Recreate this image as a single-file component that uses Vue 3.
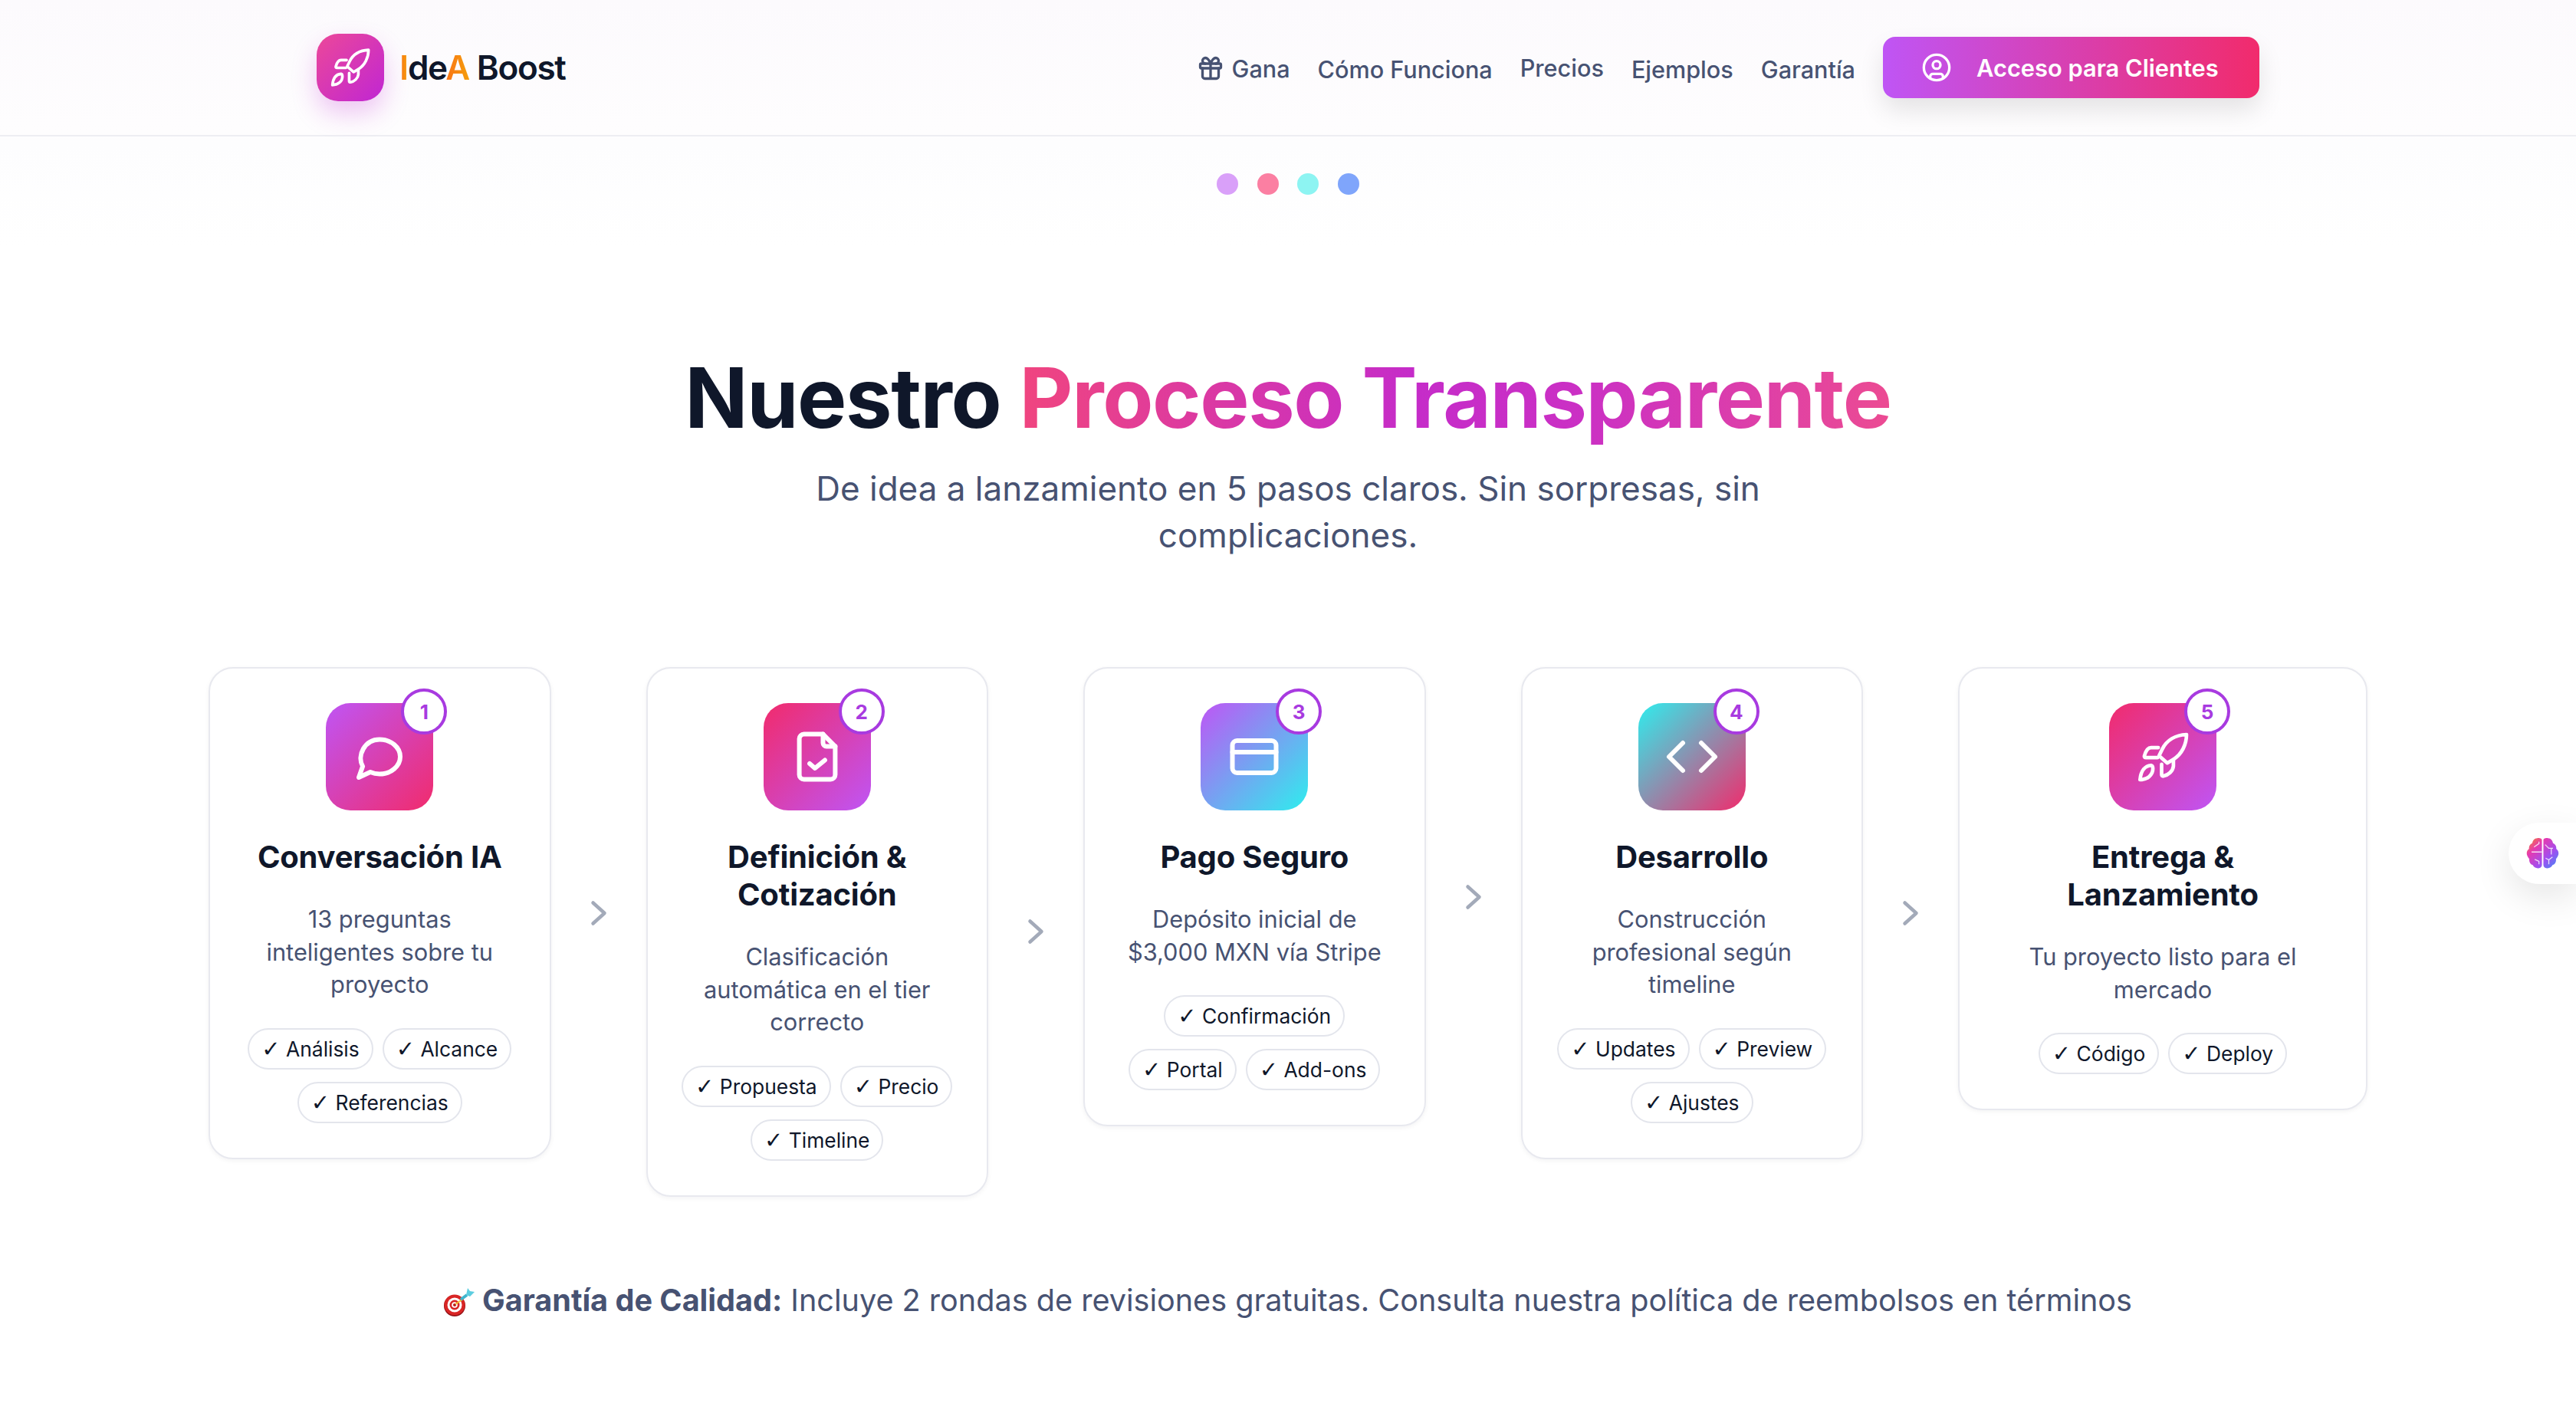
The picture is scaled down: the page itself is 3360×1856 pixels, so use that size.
<script setup>
const steps = [
  {
    n: 1,
    title: "Conversación IA",
    desc: "13 preguntas inteligentes sobre tu proyecto",
    chips: ["Análisis", "Alcance", "Referencias"],
    grad: "g1",
    icon: "chat",
  },
  {
    n: 2,
    title: "Definición & Cotización",
    desc: "Clasificación automática en el tier correcto",
    chips: ["Propuesta", "Precio", "Timeline"],
    grad: "g2",
    icon: "doc",
  },
  {
    n: 3,
    title: "Pago Seguro",
    desc: "Depósito inicial de $3,000 MXN vía Stripe",
    chips: ["Confirmación", "Portal", "Add-ons"],
    grad: "g3",
    icon: "card",
  },
  {
    n: 4,
    title: "Desarrollo",
    desc: "Construcción profesional según timeline",
    chips: ["Updates", "Preview", "Ajustes"],
    grad: "g4",
    icon: "code",
  },
  {
    n: 5,
    title: "Entrega & Lanzamiento",
    desc: "Tu proyecto listo para el mercado",
    chips: ["Código", "Deploy"],
    grad: "g5",
    icon: "rocket",
  },
];

const links = [
  { label: "Cómo Funciona", cls: "" },
  { label: "Precios", cls: "raised" },
  { label: "Ejemplos", cls: "" },
  { label: "Garantía", cls: "" },
];

const rocketPaths = [
  "M243 82C200 84 165 105 148 140L136 165L168 193L193 178C225 158 243 120 243 82Z",
  "M133 133H105C92 133 84 147 79 165C78 170 80 172 85 172H130",
  "M192 180V205C190 225 172 240 153 244C148 245 146 242 146 238V198",
  "M105 202C80 204 65 225 62 258C90 258 112 240 112 215C112 208 110 203 105 202Z",
];
</script>

<template>
  <div class="page">
    <header class="header">
      <div class="brand">
        <div class="logo">
          <svg viewBox="52 70 200 200" class="rocket logo-rocket">
            <path v-for="d in rocketPaths" :key="d" :d="d" />
          </svg>
        </div>
        <span class="brand-name"><span class="orange">I</span>de<span class="orange">A</span> Boost</span>
      </div>
      <nav class="nav">
        <a class="link gana">
          <svg viewBox="0 0 24 24" class="gift">
            <rect x="3" y="8" width="18" height="4" rx="1" />
            <path d="M12 8v13M19 12v7a2 2 0 0 1-2 2H7a2 2 0 0 1-2-2v-7" />
            <path d="M7.5 8a2.5 2.5 0 0 1 0-5C10 3 12 8 12 8s2-5 4.5-5a2.5 2.5 0 0 1 0 5" />
          </svg>
          Gana
        </a>
        <a v-for="l in links" :key="l.label" class="link" :class="l.cls">{{ l.label }}</a>
        <button class="cta">
          <svg viewBox="0 0 24 24" class="user">
            <circle cx="12" cy="12" r="10" />
            <circle cx="12" cy="10" r="3" />
            <path d="M7 20.662V19a2 2 0 0 1 2-2h6a2 2 0 0 1 2 2v1.662" />
          </svg>
          <span>Acceso para Clientes</span>
        </button>
      </nav>
    </header>

    <div class="dots">
      <i class="d1"></i><i class="d2"></i><i class="d3"></i><i class="d4"></i>
    </div>

    <section class="process">
      <h1>Nuestro <span class="grad-text">Proceso Transparente</span></h1>
      <p class="sub">De idea a lanzamiento en 5 pasos claros. Sin sorpresas, sin complicaciones.</p>

      <div class="steps">
        <div v-for="s in steps" :key="s.n" class="step">
          <article class="card">
            <div class="icon" :class="s.grad">
              <span class="badge">{{ s.n }}</span>
              <svg v-if="s.icon === 'chat'" viewBox="0 0 24 24">
                <path d="M3 21l1.7-4.800C2 11.400 5.700 4.500 12 4.500c5 0 9 3.400 9 7.500s-4 7.500-9 7.500c-1.400 0-2.800-.3-4-.8L3 21z" />
              </svg>
              <svg v-else-if="s.icon === 'doc'" viewBox="0 0 24 24">
                <path d="M14.500 2.200H6.200a2 2 0 0 0-2 2v15.600a2 2 0 0 0 2 2h11.600a2 2 0 0 0 2-2V7.500z" />
                <path d="M14.500 2.200v3.800a1.500 1.500 0 0 0 1.500 1.500h3.800M8.700 15l2.300 2 4.300-3.500" />
              </svg>
              <svg v-else-if="s.icon === 'card'" viewBox="0 0 24 24">
                <rect x="2.500" y="5" width="19" height="14" rx="2" />
                <path d="M2.500 10h19" />
              </svg>
              <svg v-else-if="s.icon === 'code'" viewBox="0 0 24 24">
                <path d="M8 6l-6 6 6 6M16 6l6 6-6 6" />
              </svg>
              <svg v-else viewBox="52 70 200 200" class="rocket">
                <path v-for="d in rocketPaths" :key="d" :d="d" />
              </svg>
            </div>
            <h3>{{ s.title }}</h3>
            <p class="desc">{{ s.desc }}</p>
            <div class="chips">
              <span v-for="c in s.chips" :key="c" class="chip"><span class="tick">✓</span> {{ c }}</span>
            </div>
          </article>
          <div v-if="s.n < 5" class="arrow">
            <svg viewBox="0 0 24 24"><path d="M7 3l10 9-10 9" /></svg>
          </div>
        </div>
      </div>

      <p class="note">
        <svg viewBox="0 0 40 40" class="target">
          <circle cx="14" cy="25" r="14" fill="#8f1015" />
          <circle cx="14" cy="24" r="13.500" fill="#d92525" />
          <circle cx="14" cy="24" r="9.500" fill="#fff" />
          <circle cx="14" cy="24" r="6.500" fill="#d92525" />
          <circle cx="14" cy="24" r="3.800" fill="#fff" />
          <circle cx="14" cy="24" r="2" fill="#b81c1c" />
          <path d="M15 23L24 17" stroke="#f2c230" stroke-width="2" />
          <path d="M22 17L30 11" stroke="#3fb4cc" stroke-width="4" />
          <path d="M29 11L31 2L34 6L40 7L34 13Z" fill="#5ccde0" />
        </svg>
        <strong>Garantía de Calidad:</strong> Incluye 2 rondas de revisiones gratuitas. Consulta nuestra política de reembolsos en términos
      </p>
    </section>

    <div class="float">
      <svg viewBox="70 78 140 135" class="brain">
        <defs>
          <linearGradient id="brainGrad" x1="0" y1="0" x2="1" y2="1">
            <stop offset="0" stop-color="#f98a1c" />
            <stop offset="0.3" stop-color="#e63ab0" />
            <stop offset="0.65" stop-color="#a04ff0" />
            <stop offset="1" stop-color="#3b8df6" />
          </linearGradient>
        </defs>
        <path
          fill="url(#brainGrad)"
          d="M137 92C137 85 128 82 118 84C106 84 100 94 98 104C88 108 83 118 85 127C78 133 74 140 76 150C78 158 82 164 86 168C84 180 90 190 100 193C104 203 116 208 126 205C133 204 137 198 137 192ZM143 92C143 85 152 82 162 84C174 84 180 94 182 104C192 108 197 118 195 127C202 133 206 140 204 150C202 158 198 164 194 168C196 180 190 190 180 193C176 203 164 208 154 205C147 204 143 198 143 192Z"
        />
        <path
          fill="none"
          stroke="#fff"
          stroke-opacity=".8"
          stroke-width="4"
          d="M105 120L125 106V98M95 140H137M108 170L125 178V190M150 110L165 125H182M175 125V150M152 165L165 172L180 160M165 172V190"
        />
      </svg>
    </div>
  </div>
</template>

<style scoped>
.page {
  position: relative;
  min-height: 1856px;
  overflow: hidden;
  font-family: Inter, "Liberation Sans", sans-serif;
  background: linear-gradient(180deg, #fcfafd 0, #fefdfe 170px, #fdfdfe 190px, #ffffff 320px);
  color: #0f172a;
}

.header {
  height: 176px;
  border-bottom: 2px solid #eeeef3;
  padding: 0 413px;
  display: flex;
  align-items: center;
  justify-content: space-between;
}

.brand {
  display: flex;
  align-items: center;
  gap: 20px;
}

.logo {
  width: 88px;
  height: 88px;
  border-radius: 28px;
  background: linear-gradient(135deg, #ec4899, #c026d3);
  box-shadow: 0 16px 32px rgba(192, 38, 211, 0.25);
  display: flex;
  align-items: center;
  justify-content: center;
}

.rocket {
  fill: none;
  stroke: #fff;
  stroke-width: 14;
  stroke-linecap: round;
  stroke-linejoin: round;
}

.logo-rocket {
  width: 52px;
  height: 52px;
}

.brand-name {
  font-size: 44px;
  font-weight: 600;
  letter-spacing: -1.3px;
}

.orange {
  background: linear-gradient(90deg, #f97316, #f59e0b);
  -webkit-background-clip: text;
  background-clip: text;
  color: transparent;
}

.nav {
  display: flex;
  align-items: center;
  gap: 36px;
}

.link {
  margin-top: 4px;
  font-size: 30.6px;
  font-weight: 500;
  color: #475272;
  display: flex;
  align-items: center;
  gap: 10px;
}

.gana {
  margin-top: 2px;
}

.raised {
  margin-top: 0;
}

.gift {
  width: 36px;
  height: 36px;
  fill: none;
  stroke: #475272;
  stroke-width: 2.2;
  stroke-linecap: round;
  stroke-linejoin: round;
}

.cta {
  width: 491px;
  height: 80px;
  border: 0;
  border-radius: 16px;
  background: linear-gradient(90deg, #bf55f5, #f12b6c);
  box-shadow: 0 16px 32px rgba(0, 0, 0, 0.1);
  color: #fff;
  font-family: inherit;
  font-size: 30.8px;
  font-weight: 600;
  display: flex;
  align-items: center;
  gap: 32px;
  padding: 0 50px;
}

.user {
  width: 40px;
  height: 40px;
  fill: none;
  stroke: #fff;
  stroke-width: 2;
  stroke-linecap: round;
  stroke-linejoin: round;
}

.dots {
  display: flex;
  justify-content: center;
  gap: 24.5px;
  margin-top: 48px;
}

.dots i {
  width: 28px;
  height: 28px;
  border-radius: 50%;
}

.d1 { background: #d9a0f9; }
.d2 { background: #fb7fa2; }
.d3 { background: #8df4f2; }
.d4 { background: #7fa5fb; }

.process {
  padding: 0 272px;
  text-align: center;
}

h1 {
  margin: 197px 0 0;
  font-size: 108px;
  line-height: 136px;
  font-weight: 700;
  letter-spacing: -0.0125em;
  color: #0f172a;
}

.grad-text {
  background: linear-gradient(90deg, #f0457f 0, #c52cc9 45%, #cb30c4 65%, #ec4b92 100%);
  -webkit-background-clip: text;
  background-clip: text;
  color: transparent;
}

.sub {
  margin: 20px auto 0;
  width: 1344px;
  font-size: 44px;
  line-height: 61px;
  color: #475272;
}

.steps {
  display: flex;
  align-items: flex-start;
  margin-top: 141px;
}

.step {
  flex: 0 0 570.5px;
  display: flex;
  align-items: center;
}

.step:last-child {
  flex: 1;
}

.card {
  flex: 1;
  border: 2px solid #e8e9ef;
  border-radius: 32px;
  background: #fff;
  box-shadow: 0 2px 6px rgba(15, 23, 42, 0.05);
  padding: 45px 40px 45px;
}

.icon {
  position: relative;
  width: 140px;
  height: 140px;
  border-radius: 32px;
  margin: 0 auto 36px;
  display: flex;
  align-items: center;
  justify-content: center;
}

.icon svg {
  width: 72px;
  height: 72px;
  fill: none;
  stroke: #fff;
  stroke-width: 2;
  stroke-linecap: round;
  stroke-linejoin: round;
}

.icon svg.rocket {
  width: 67px;
  height: 67px;
  stroke-width: 14;
}

.g1 { background: linear-gradient(135deg, #bf55f5, #f12b6c); }
.g2 { background: linear-gradient(135deg, #f12b6c, #bf55f5); }
.g3 { background: linear-gradient(135deg, #bf55f5, #2eeeee); }
.g4 { background: linear-gradient(135deg, #2eeeee, #f12b6c); }
.g5 { background: linear-gradient(135deg, #f12b6c, #bf55f5); }

.badge {
  position: absolute;
  top: -19px;
  right: -18px;
  width: 60px;
  height: 60px;
  box-sizing: border-box;
  border: 4px solid #a83ae0;
  border-radius: 50%;
  background: #fff;
  color: #a83ae0;
  font-size: 26px;
  font-weight: 700;
  display: flex;
  align-items: center;
  justify-content: center;
}

h3 {
  margin: 0 0 36px;
  padding: 0 6px;
  font-size: 40px;
  line-height: 49px;
  font-weight: 700;
  letter-spacing: -0.2px;
  color: #0f172a;
}

.desc {
  margin: 0 0 35px;
  padding: 0 6px;
  font-size: 30.8px;
  line-height: 42.6px;
  color: #475272;
}

.chips {
  display: flex;
  flex-wrap: wrap;
  justify-content: center;
  gap: 16px 12px;
}

.chip {
  border: 2px solid #e3e5ec;
  border-radius: 999px;
  padding: 0 16px;
  height: 54px;
  line-height: 50px;
  box-sizing: border-box;
  font-size: 26.4px;
  color: #0f172a;
}

.tick {
  font-family: "DejaVu Sans", sans-serif;
  font-size: 29px;
  font-weight: 700;
  line-height: 1;
}

.arrow {
  flex: 0 0 124px;
  display: flex;
  justify-content: center;
}

.arrow svg {
  width: 36px;
  height: 36px;
  fill: none;
  stroke: #a3aab9;
  stroke-width: 3;
  stroke-linecap: round;
  stroke-linejoin: round;
}

.note {
  margin: 105px 0 0;
  font-size: 39.6px;
  line-height: 60px;
  color: #475272;
}

.note strong {
  font-weight: 700;
}

.target {
  width: 40px;
  height: 40px;
  margin-right: 10px;
  vertical-align: -8px;
}

.float {
  position: absolute;
  top: 1073px;
  right: 0;
  width: 88px;
  height: 80px;
  border-radius: 40px 0 0 40px;
  background: #fff;
  box-shadow: 0 16px 48px rgba(0, 0, 0, 0.1);
  display: flex;
  align-items: center;
  justify-content: center;
}

.brain {
  width: 45px;
  height: 44px;
}
</style>
